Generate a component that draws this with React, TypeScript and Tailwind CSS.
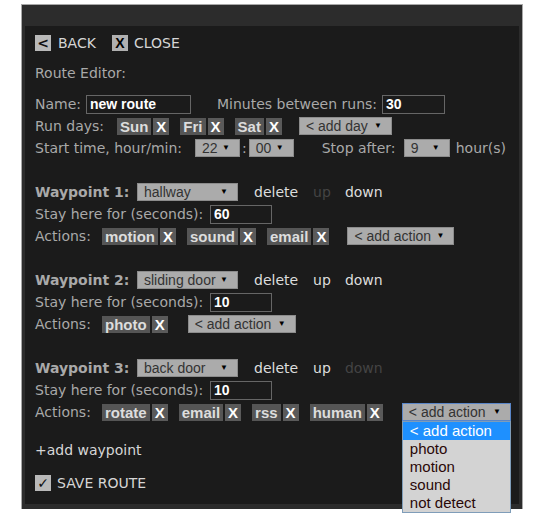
import React from 'react';

const label = "text-[#a9a9a9]";

function Tag({ text }: { text: string }) {
  return (
    <span className="flex items-center gap-[2px]">
      <span className="h-[17px] flex items-center px-[3px] bg-[#555] text-[#ddd] font-bold text-[15px] leading-none font-['Liberation_Sans',Arial,sans-serif]">
        {text}
      </span>
      <span className="h-[17px] flex items-center px-[3px] bg-[#5a5a5a] text-white font-bold text-[15px] leading-none font-['Liberation_Sans',Arial,sans-serif]">
        X
      </span>
    </span>
  );
}

function Select({ value, w, focused }: { value: string; w: string; focused?: boolean }) {
  return (
    <span
      className={`${w} h-[18px] flex items-center justify-between pl-[6px] pr-[9px] bg-[#ababab] border ${
        focused ? 'border-[#5a86c8]' : 'border-[#8c8c8c]'
      } text-[#333] text-[14px] leading-none font-['Liberation_Sans',Arial,sans-serif]`}
    >
      <span>{value}</span>
      <span className="text-[8px] text-black">▼</span>
    </span>
  );
}

function Input({ value, w }: { value: string; w: string }) {
  return (
    <span className={`${w} h-[19px] flex items-center px-[3px] border border-[#666] bg-[#1b1b1b] text-white font-bold text-[14px] leading-none font-['Liberation_Sans',Arial,sans-serif]`}>
      {value}
    </span>
  );
}

function Waypoint({
  n,
  place,
  stay,
  upOff,
  downOff,
  children,
}: {
  n: number;
  place: string;
  stay: string;
  upOff?: boolean;
  downOff?: boolean;
  children: React.ReactNode;
}) {
  return (
    <div className="mt-[22px]">
      <div className="h-[22px] flex items-center">
        <span className={`${label} font-bold w-[102px]`}>Waypoint {n}:</span>
        <Select value={place} w="w-[101px]" />
        <span className="ml-[16px] text-[#ddd]">delete</span>
        <span className={`ml-[15px] ${upOff ? 'text-[#444]' : 'text-[#ddd]'}`}>up</span>
        <span className={`ml-[14px] ${downOff ? 'text-[#444]' : 'text-[#ddd]'}`}>down</span>
      </div>
      <div className="h-[22px] flex items-center">
        <span className={`${label} w-[175px]`}>Stay here for (seconds):</span>
        <Input value={stay} w="w-[62px]" />
      </div>
      <div className="h-[22px] flex items-center">
        <span className={`${label} w-[67px]`}>Actions:</span>
        {children}
      </div>
    </div>
  );
}

export default function App() {
  return (
    <div className="w-[544px] h-[516px] bg-white pt-[4px] pl-[21px] font-['DejaVu_Sans',Verdana,sans-serif] text-[14px]">
      <div className="w-[502px] h-[505px] border border-b-0 border-[#a8a8a8] bg-[#2c2c2c] pt-[21px] px-[3px] pb-[5px]">
        <div className="h-full bg-[#1b1b1b] pl-[10px] pt-[8px]">
          <div className="h-[18px] flex items-center">
            <span className="w-[16px] h-[16px] flex items-center justify-center bg-[#b9b9b9] text-[#111] font-bold text-[14px] leading-none">&lt;</span>
            <span className="ml-[7px] text-[#d6d6d6]">BACK</span>
            <span className="ml-[16px] w-[16px] h-[16px] flex items-center justify-center bg-[#b0b0b0] text-black font-bold text-[14px] leading-none font-['Liberation_Sans',Arial,sans-serif]">X</span>
            <span className="ml-[6px] text-[#d6d6d6]">CLOSE</span>
          </div>
          <div className={`mt-[10px] h-[22px] flex items-center ${label}`}>Route Editor:</div>

          <div className="mt-[9px] h-[22px] flex items-center">
            <span className={`${label} w-[51px]`}>Name:</span>
            <Input value="new route" w="w-[105px]" />
            <span className={`${label} ml-[26px] w-[165px]`}>Minutes between runs:</span>
            <Input value="30" w="w-[63px]" />
          </div>
          <div className="h-[22px] flex items-center">
            <span className={`${label} w-[82px]`}>Run days:</span>
            <span className="flex items-center gap-[11px]">
              <Tag text="Sun" />
              <Tag text="Fri" />
              <Tag text="Sat" />
            </span>
            <span className="ml-[17px]">
              <Select value="< add day" w="w-[93px]" />
            </span>
          </div>
          <div className="h-[22px] flex items-center">
            <span className={`${label} w-[160px]`}>Start time, hour/min:</span>
            <Select value="22" w="w-[45px]" />
            <span className={`${label} mx-[2px]`}>:</span>
            <Select value="00" w="w-[45px]" />
            <span className={`${label} ml-[28px] w-[82px]`}>Stop after:</span>
            <Select value="9" w="w-[46px]" />
            <span className={`${label} ml-[6px]`}>hour(s)</span>
          </div>

          <Waypoint n={1} place="hallway" stay="60" upOff>
            <span className="flex items-center gap-[11px]">
              <Tag text="motion" />
              <Tag text="sound" />
              <Tag text="email" />
            </span>
            <span className="ml-[18px]">
              <Select value="< add action" w="w-[107px]" />
            </span>
          </Waypoint>

          <Waypoint n={2} place="sliding door" stay="10">
            <Tag text="photo" />
            <span className="ml-[20px]">
              <Select value="< add action" w="w-[108px]" />
            </span>
          </Waypoint>

          <Waypoint n={3} place="back door" stay="10" downOff>
            <span className="flex items-center gap-[11px]">
              <Tag text="rotate" />
              <Tag text="email" />
              <Tag text="rss" />
              <Tag text="human" />
            </span>
            <span className="ml-[19px] relative">
              <Select value="< add action" w="w-[109px]" focused />
              <div className="absolute left-0 top-[18px] w-[109px] border border-[#7f9db9] bg-[#d3d3d3] z-10 font-['Liberation_Sans',Arial,sans-serif] text-[15px] leading-[18px] text-[#2a0808]">
                <div className="bg-[#1e90ff] text-white pl-[7px]">&lt; add action</div>
                <div className="pl-[7px]">photo</div>
                <div className="pl-[7px]">motion</div>
                <div className="pl-[7px]">sound</div>
                <div className="pl-[7px]">not detect</div>
              </div>
            </span>
          </Waypoint>

          <div className="mt-[16px] h-[22px] flex items-center text-[#d6d6d6]">+add waypoint</div>
          <div className="mt-[11px] h-[22px] flex items-center">
            <span className="w-[16px] h-[16px] flex items-center justify-center bg-[#b9b9b9] text-[#111] text-[14px] leading-none">✓</span>
            <span className="ml-[6px] text-[#d6d6d6]">SAVE ROUTE</span>
          </div>
        </div>
      </div>
    </div>
  );
}
